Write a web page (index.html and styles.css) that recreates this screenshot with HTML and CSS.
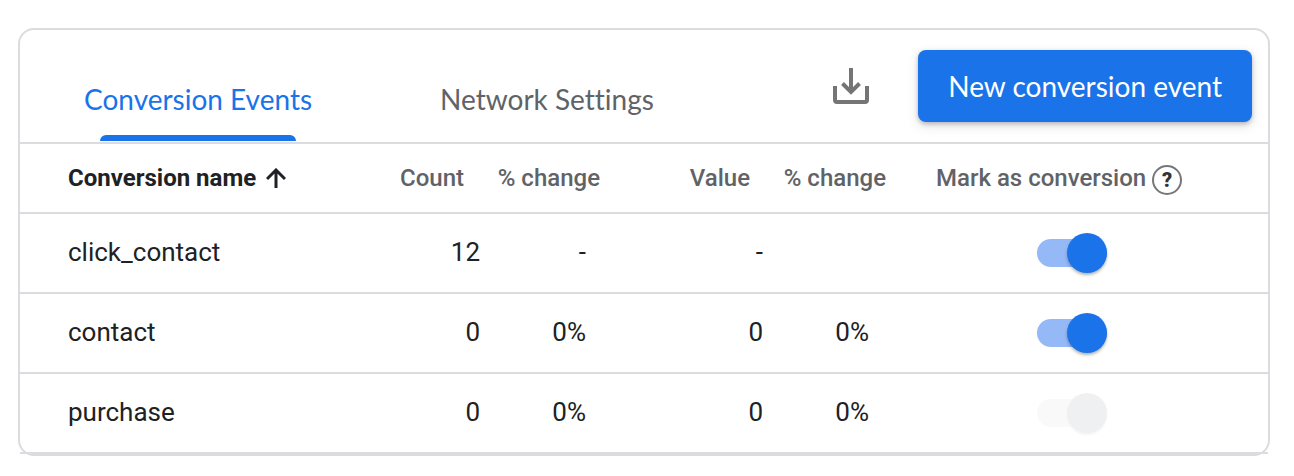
FILE: index.html
```html
<!doctype html>
<html lang="en">

<head>
  <meta charset="utf-8">
  <meta name="viewport" content="width=device-width, initial-scale=1">
  <title>Conversion Events</title>
  <link rel="stylesheet" href="styles.css">
</head>

<body>
  <div class="card">
    <div class="header">
      <div class="tabs" role="tablist">
        <button class="tab active" role="tab" aria-selected="true">Conversion Events</button>
        <button class="tab" role="tab" aria-selected="false">Network Settings</button>
      </div>
      <div class="actions">
        <button class="icon-button" aria-label="Download">
          <svg width="38" height="38" viewBox="0 0 38 38" fill="none" stroke="#757575" stroke-width="4">
            <path d="M19 1v22" />
            <path d="M10.500 16.500l8.500 8.500 8.500-8.500" />
            <path d="M15 20h8l-4 5z" fill="#757575" stroke="none" />
            <path d="M3 19v14q0 2 2 2h28q2 0 2-2V19" />
          </svg>
        </button>
        <button class="button">New conversion event</button>
      </div>
    </div>
    <table class="events">
      <colgroup>
        <col>
        <col class="col-count">
        <col class="col-change">
        <col class="col-value">
        <col class="col-change">
        <col class="col-mark">
      </colgroup>
      <thead>
        <tr>
          <th class="name">
            <span class="label">Conversion name
              <svg width="20" height="20" viewBox="0 0 20 20" fill="none" stroke="#202124" stroke-width="3">
                <path d="M10 20V2M1 11l9-9 9 9" />
              </svg>
            </span>
          </th>
          <th>Count</th>
          <th>% change</th>
          <th>Value</th>
          <th>% change</th>
          <th class="mark">
            <span class="label">Mark as conversion
              <button class="help" aria-label="Help">?</button>
            </span>
          </th>
        </tr>
      </thead>
      <tbody>
        <tr>
          <td class="name">click_contact</td>
          <td class="count">12</td>
          <td class="count-change">-</td>
          <td class="value">-</td>
          <td class="value-change"></td>
          <td class="mark"><input type="checkbox" class="switch" aria-label="Mark click_contact as conversion" checked></td>
        </tr>
        <tr>
          <td class="name">contact</td>
          <td class="count">0</td>
          <td class="count-change">0%</td>
          <td class="value">0</td>
          <td class="value-change">0%</td>
          <td class="mark"><input type="checkbox" class="switch" aria-label="Mark contact as conversion" checked></td>
        </tr>
        <tr>
          <td class="name">purchase</td>
          <td class="count">0</td>
          <td class="count-change">0%</td>
          <td class="value">0</td>
          <td class="value-change">0%</td>
          <td class="mark"><input type="checkbox" class="switch" aria-label="Mark purchase as conversion" checked disabled></td>
        </tr>
      </tbody>
    </table>
  </div>
</body>

</html>
```
FILE: styles.css
```css
* {
  box-sizing: border-box;
}

body {
  margin: 0;
  padding: 28px 24px 20px 18px;
  background: #fff;
  color: #202124;
  font-family: Roboto, Arial, sans-serif;
}

button {
  border: none;
  background: none;
  padding: 0;
  cursor: pointer;
}

.card {
  border: 2px solid #dadce0;
  border-radius: 16px;
}

/* Header with tabs and actions */
.header {
  display: flex;
  justify-content: space-between;
  border-bottom: 2px solid #dadce0;
}

.tabs {
  display: flex;
}

.tab {
  position: relative;
  padding: 26px 64px 0;
  color: #5f6368;
  font: 28px Lato, sans-serif;
  font-variant-ligatures: none;
  white-space: nowrap;
}

.tab.active {
  color: #1a73e8;
}

.tab.active::after {
  content: "";
  position: absolute;
  left: 80px;
  right: 80px;
  bottom: 1px;
  height: 6px;
  border-radius: 6px 6px 0 0;
  background: #1a73e8;
}

.actions {
  display: flex;
  align-items: center;
  gap: 48px;
  padding: 20px 16px;
}

.icon-button svg {
  display: block;
}

.button {
  height: 72px;
  padding: 0 30px;
  border-radius: 8px;
  background: #1a73e8;
  color: #fff;
  font: 28px Lato, sans-serif;
  white-space: nowrap;
  box-shadow: 0 2px 4px rgba(60, 64, 67, 0.3), 0 4px 12px rgba(60, 64, 67, 0.15);
}

/* Events table */
.events {
  width: 100%;
  table-layout: fixed;
  border-spacing: 0;
}

.col-count {
  width: 126px;
}

.col-change {
  width: 136px;
}

.col-value {
  width: 150px;
}

.col-mark {
  width: 364px;
}

.events th {
  padding: 20px 18px 20px 0;
  border-bottom: 2px solid #dadce0;
  color: #5f6368;
  font-size: 24px;
  font-weight: 500;
  line-height: 28px;
  text-align: right;
  white-space: nowrap;
}

.events td {
  padding: 23px 0 25px;
  border-bottom: 2px solid #dadce0;
  font-size: 26px;
  line-height: 30px;
  text-align: right;
}

.events .name {
  padding-left: 48px;
  text-align: left;
}

.events th.name {
  color: #202124;
  font-weight: 700;
}

.events th.mark {
  padding-left: 32px;
  text-align: left;
}

.events td.count {
  padding-right: 2px;
}

.events td.count-change {
  padding-right: 32px;
}

.events td.value {
  padding-right: 5px;
}

.events td.value-change {
  padding-right: 35px;
}

.events td.mark {
  padding: 0 28px 0 0;
  line-height: 0;
  text-align: center;
}

.label {
  display: flex;
  align-items: center;
  gap: 10px;
  height: 28px;
}

.mark .label {
  gap: 6px;
}

.help {
  width: 30px;
  height: 30px;
  margin-top: 4px;
  border: 2px solid #777;
  border-radius: 50%;
  color: #333;
  font: 900 20px Roboto, sans-serif;
}

/* Toggle switch */
.switch {
  display: flex;
  align-items: center;
  appearance: none;
  width: 70px;
  height: 28px;
  margin: 0 auto;
  border-radius: 14px;
  background: #dadce0;
  cursor: pointer;
}

.switch::after {
  content: "";
  flex: none;
  width: 40px;
  height: 40px;
  border-radius: 50%;
  background: #fff;
  box-shadow: 0 2px 3px rgba(60, 64, 67, 0.4);
}

.switch:checked {
  justify-content: flex-end;
  background: #95b8f6;
}

.switch:checked::after {
  background: #1a73e8;
}

.switch:disabled {
  background: #f9f9f9;
  cursor: default;
}

.switch:disabled::after {
  background: #eff0f2;
  box-shadow: 0 2px 2px #f4f5f6;
}
```
